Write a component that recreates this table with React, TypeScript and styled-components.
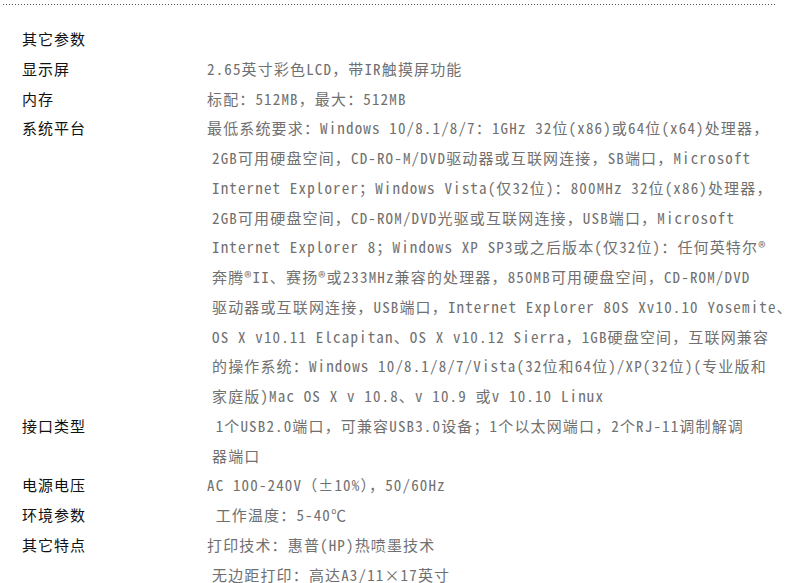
import React from "react";
import styled, { createGlobalStyle } from "styled-components";

const GlobalStyle = createGlobalStyle`
  body {
    margin: 0;
    background: #fff;
  }
`;

type Spec = {
  label: string;
  lines: string[];
};

const specs: Spec[] = [
  { label: "其它参数", lines: [""] },
  { label: "显示屏", lines: ["2.65英寸彩色LCD，带IR触摸屏功能"] },
  { label: "内存", lines: ["标配：512MB，最大：512MB"] },
  {
    label: "系统平台",
    lines: [
      "最低系统要求：Windows 10/8.1/8/7：1GHz 32位(x86)或64位(x64)处理器，",
      "2GB可用硬盘空间，CD-RO-M/DVD驱动器或互联网连接，SB端口，Microsoft",
      "Internet Explorer；Windows Vista(仅32位)：800MHz 32位(x86)处理器，",
      "2GB可用硬盘空间，CD-ROM/DVD光驱或互联网连接，USB端口，Microsoft",
      "Internet Explorer 8；Windows XP SP3或之后版本(仅32位)：任何英特尔®",
      "奔腾®II、赛扬®或233MHz兼容的处理器，850MB可用硬盘空间，CD-ROM/DVD",
      "驱动器或互联网连接，USB端口，Internet Explorer 8OS Xv10.10 Yosemite、",
      "OS X v10.11 Elcapitan、OS X v10.12 Sierra，1GB硬盘空间，互联网兼容",
      "的操作系统：Windows 10/8.1/8/7/Vista(32位和64位)/XP(32位)(专业版和",
      "家庭版)Mac OS X v 10.8、v 10.9 或v 10.10 Linux",
    ],
  },
  {
    label: "接口类型",
    lines: [
      " 1个USB2.0端口，可兼容USB3.0设备；1个以太网端口，2个RJ-11调制解调",
      "器端口",
    ],
  },
  { label: "电源电压", lines: ["AC 100-240V（±10%），50/60Hz"] },
  { label: "环境参数", lines: [" 工作温度：5-40℃"] },
  { label: "其它特点", lines: ["打印技术：惠普(HP)热喷墨技术", "无边距打印：高达A3/11×17英寸"] },
];

const Page = styled.div`
  width: 790px;
  height: 583px;
  overflow: hidden;
  padding-top: 4px;
  box-sizing: border-box;
  font-family: "Noto Sans Mono CJK SC", "Noto Sans CJK SC", "Liberation Mono", monospace;
  font-size: 15px;
  letter-spacing: 1.15px;
`;

const Divider = styled.div`
  margin-left: 3px;
  width: 774px;
  height: 1px;
  background-image: linear-gradient(to right, #555 1px, transparent 1px);
  background-size: 3px 1px;
`;

const Table = styled.div`
  padding: 19px 0 0 22px;
  display: flex;
  flex-direction: column;
`;

const Row = styled.div`
  display: grid;
  grid-template-columns: 185px 1fr;
  line-height: 29.75px;
`;

const Label = styled.div`
  color: #111;
  letter-spacing: 1px;
`;

const Value = styled.div`
  display: flex;
  flex-direction: column;
  color: #707070;
`;

const Line = styled.div<{ $indent: boolean }>`
  white-space: pre;
  padding-left: ${(p) => (p.$indent ? "5px" : "0")};
  min-height: 29.75px;
`;

export default function App() {
  return (
    <>
      <GlobalStyle />
      <Page>
        <Divider />
        <Table>
          {specs.map((s) => (
            <Row key={s.label}>
              <Label>{s.label}</Label>
              <Value>
                {s.lines.map((l, i) => (
                  <Line key={i} $indent={i > 0}>
                    {l}
                  </Line>
                ))}
              </Value>
            </Row>
          ))}
        </Table>
      </Page>
    </>
  );
}
